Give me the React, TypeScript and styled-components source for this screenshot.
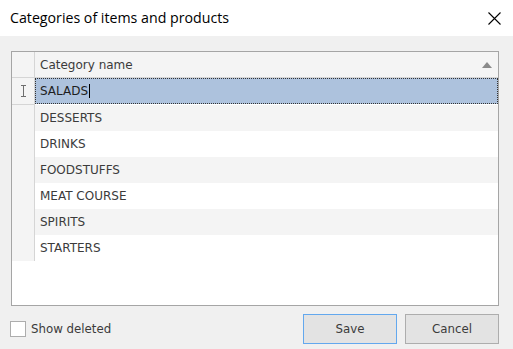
import { Fragment } from "react";
import styled, { createGlobalStyle } from "styled-components";

const Global = createGlobalStyle`
  html, body { margin: 0; padding: 0; background: #f0f0f0; }
  body { width: 513px; height: 349px; overflow: hidden; }
`;

const categories = ["SALADS", "DESSERTS", "DRINKS", "FOODSTUFFS", "MEAT COURSE", "SPIRITS", "STARTERS"];

const Dialog = styled.div`
  width: 513px;
  height: 349px;
  display: flex;
  flex-direction: column;
  background: #f0f0f0;
  font-family: "DejaVu Sans", Verdana, sans-serif;
  color: #3b3b3b;
`;

const TitleBar = styled.div`
  height: 36px;
  flex: none;
  background: #fff;
  display: flex;
  align-items: center;
  justify-content: space-between;
  padding: 0 14px 0 10px;
  box-sizing: border-box;
`;

const Title = styled.span`
  font-family: "Open Sans", "Noto Sans", sans-serif;
  font-size: 14.2px;
  color: #000;
  margin-top: -2px;
`;

const Body = styled.div`
  flex: 1;
  display: flex;
  flex-direction: column;
  padding: 15px 14px 7px 11px;
  gap: 8px;
`;

const Grid = styled.div`
  height: 255px;
  border: 1px solid #a5a5a5;
  box-sizing: border-box;
  background: #fff;
  display: flex;
  flex-direction: column;
`;

const HeaderRow = styled.div`
  display: grid;
  grid-template-columns: 23px 1fr;
  height: 25px;
  background: #f4f4f4;
  border-bottom: 1px solid #d5d5d5;
  flex: none;
`;

const Indicator = styled.div<{ $bottom?: boolean }>`
  border-right: 1px solid #d5d5d5;
  background: #f4f4f4;
  display: flex;
  align-items: center;
  justify-content: center;
  box-sizing: border-box;
  border-bottom: ${(p) => (p.$bottom ? "1px solid #d5d5d5" : "none")};
`;

const HeaderCell = styled.div`
  display: flex;
  align-items: center;
  justify-content: space-between;
  padding: 0 6px 0 5px;
  font-size: 12px;
  color: #3b3b3b;
`;

const Rows = styled.div`
  display: grid;
  grid-template-columns: 23px 1fr;
  flex: none;
`;

const Cell = styled.div<{ $alt?: boolean; $selected?: boolean }>`
  height: 26px;
  display: flex;
  align-items: center;
  font-size: 12px;
  box-sizing: border-box;
  background: ${(p) => (p.$selected ? "#adc2dd" : p.$alt ? "#f4f4f4" : "#fff")};
  border: ${(p) => (p.$selected ? "1px dotted #333" : "none")};
  padding-left: ${(p) => (p.$selected ? "4px" : "5px")};
  margin-bottom: ${(p) => (p.$selected ? "1px" : "0")};
  color: ${(p) => (p.$selected ? "#1e1e1e" : "#3b3b3b")};
`;

const Caret = styled.span`
  display: inline-block;
  width: 1px;
  height: 14px;
  background: #000;
  margin-left: 1px;
`;

const IndicatorStrip = styled.div`
  border-right: 1px solid #d5d5d5;
  background: #f4f4f4;
`;

const Footer = styled.div`
  display: flex;
  align-items: center;
  gap: 8px;
`;

const CheckLabel = styled.label`
  display: flex;
  align-items: center;
  gap: 5px;
  font-size: 11.8px;
  color: #3b3b3b;
  margin-right: auto;
  margin-left: -1px;
`;

const Box = styled.span`
  width: 14px;
  height: 14px;
  border: 1px solid #adadad;
  background: #fff;
  display: inline-block;
`;

const Button = styled.button<{ $focused?: boolean }>`
  width: 94px;
  height: 30px;
  font-family: "DejaVu Sans", Verdana, sans-serif;
  font-size: 11.8px;
  color: #3b3b3b;
  background: #e3e3e3;
  border: 1px solid ${(p) => (p.$focused ? "#63a8ee" : "#adadad")};
  box-sizing: border-box;
  padding: 0;
`;

const CloseIcon = styled.svg`
  margin-right: -2px;
`;

export default function App() {
  return (
    <Dialog>
      <Global />
      <TitleBar>
        <Title>Categories of items and products</Title>
        <CloseIcon width="13" height="13" viewBox="0 0 13 13">
          <path d="M0.5 0.5L12.5 12.5M12.5 0.5L0.5 12.5" stroke="#000" strokeWidth="1.1" />
        </CloseIcon>
      </TitleBar>
      <Body>
        <Grid>
          <HeaderRow>
            <Indicator />
            <HeaderCell>
              Category name
              <svg width="10" height="6" viewBox="0 0 10 6">
                <path d="M5 0L10 6H0Z" fill="#8a8a8a" />
              </svg>
            </HeaderCell>
          </HeaderRow>
          <Rows>
            {categories.map((name, i) => (
              <Fragment key={name}>
                {i === 0 ? (
                  <Indicator $bottom>
                    <svg width="7" height="12" viewBox="0 0 7 12">
                      <path d="M1 0.5H6M3.5 0.5V11.5M1 11.5H6" stroke="#6e6e6e" strokeWidth="1" fill="none" />
                    </svg>
                  </Indicator>
                ) : (
                  <IndicatorStrip />
                )}
                <Cell $selected={i === 0} $alt={i % 2 === 1}>
                  {name}
                  {i === 0 && <Caret />}
                </Cell>
              </Fragment>
            ))}
          </Rows>
        </Grid>
        <Footer>
          <CheckLabel>
            <Box />
            Show deleted
          </CheckLabel>
          <Button $focused>Save</Button>
          <Button>Cancel</Button>
        </Footer>
      </Body>
    </Dialog>
  );
}
